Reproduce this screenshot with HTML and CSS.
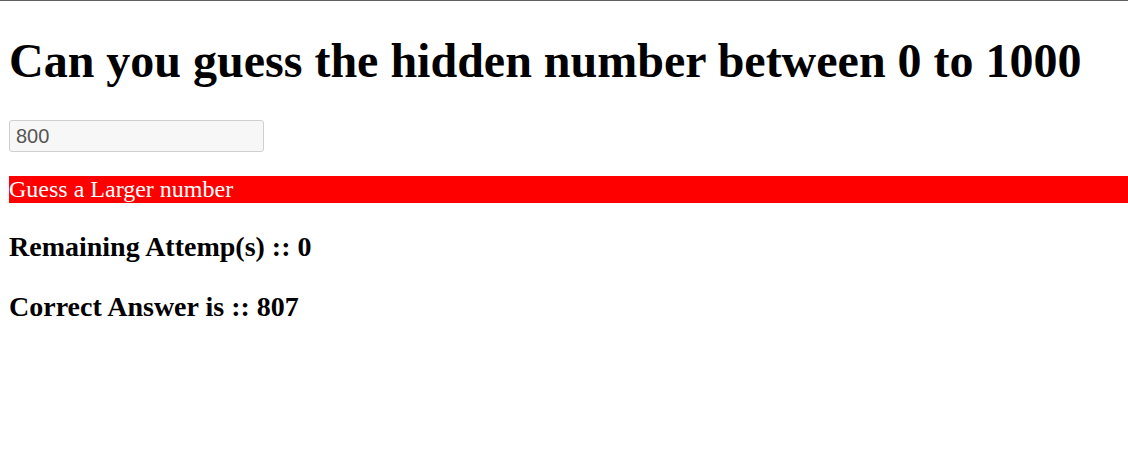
FILE: index.html
```html
<!DOCTYPE html>
<html>
<head>
<meta charset="utf-8">
<title>Guess the number</title>
<link rel="stylesheet" href="styles.css">
</head>
<body>
<h1 class="title">Can you guess the hidden number between 0 to 1000</h1>
<div class="field-row"><input class="guess-input" type="text" value="800"></div>
<div class="hint">Guess a Larger number</div>
<h2 class="stat">Remaining Attemp(s) :: 0</h2>
<h2 class="stat">Correct Answer is :: 807</h2>
</body>
</html>
```
FILE: styles.css
```css
html {
  border-top: 1px solid #5f5f5f;
  background: #fff;
  overflow: hidden;
}
body {
  margin: 8px 0 8px 9px;
  font-family: "Liberation Serif", "Times New Roman", serif;
  color: #000;
}
.title {
  font-size: 48px;
  font-weight: bold;
  margin: 24px 0 32px;
}
.field-row {
  margin: 0;
}
.guess-input {
  box-sizing: border-box;
  width: 255px;
  height: 32px;
  margin: 0;
  padding: 0 6px;
  border: 1px solid #cfcfcf;
  border-radius: 3px;
  background: #f7f7f7;
  color: #555;
  font-family: "Liberation Sans", Arial, sans-serif;
  font-size: 20px;
  outline: none;
}
.hint {
  margin: 24px 0 0;
  background: #f00;
  color: #fff;
  font-size: 24px;
  line-height: 27px;
  height: 27px;
}
.stat {
  font-size: 28px;
  font-weight: bold;
  margin: 28px 0 0;
  line-height: 32px;
}
```
